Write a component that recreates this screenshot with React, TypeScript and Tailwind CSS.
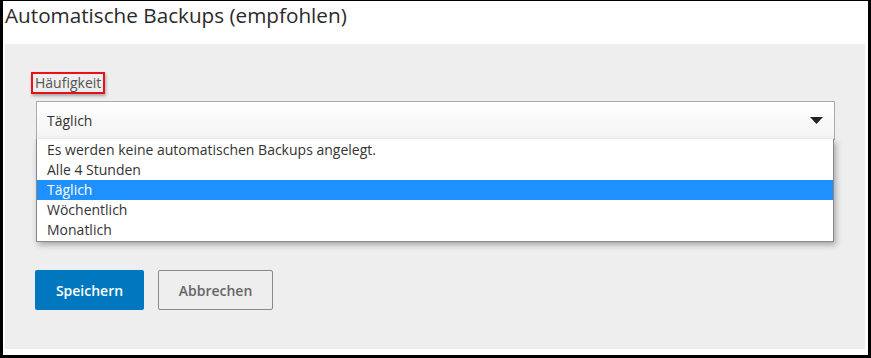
import React from "react";

export default function App() {
  const options = [
    "Es werden keine automatischen Backups angelegt.",
    "Alle 4 Stunden",
    "Täglich",
    "Wöchentlich",
    "Monatlich",
  ];
  return (
    <div
      className="w-[871px] h-[358px] bg-black pl-[3px] pt-[1px] pr-[3px] pb-[3px]"
      style={{ fontFamily: '"Open Sans", sans-serif' }}
    >
      <div className="w-full h-full bg-white flex flex-col pl-[2px] pr-[3px] pb-[6px]">
        <div className="h-[43px] text-[20.7px] leading-[28px] text-[#2a2a2a] pt-[0px]">
          Automatische Backups (empfohlen)
        </div>
        <div className="flex-1 bg-[#eeeeee] pl-[31px] pr-[30px] pt-[26px] relative">
          <div className="inline-block border-2 border-[#e8101a] px-[2px] h-[22px] leading-[17px] text-[14px] text-[#555] shadow-[1px_2px_3px_rgba(0,0,0,0.3)] -ml-[5px]">
            Häufigkeit
          </div>
          <div className="mt-[7px] h-[39px] bg-gradient-to-b from-white to-[#f4f4f4] border border-[#aaa] flex items-center justify-between pl-[10px] pr-[11px] text-[14px] text-[#333]">
            <span>Täglich</span>
            <svg width="13" height="7" viewBox="0 0 13 7">
              <polygon points="0,0 13,0 6.5,7" fill="#222" />
            </svg>
          </div>
          <div className="absolute left-[31px] top-[95px] w-[798px] bg-white border border-[#888] border-t-0 shadow-[2px_3px_6px_rgba(0,0,0,0.3)] text-[14px] text-[#333] pt-px pb-px">
            {options.map((o) => (
              <div
                key={o}
                className={
                  "h-[20px] leading-[20px] pl-[10px] " +
                  (o === "Täglich" ? "bg-[#1e90ff] text-white" : "")
                }
              >
                {o}
              </div>
            ))}
          </div>
          <div className="mt-[130px] flex gap-[14px] -ml-px">
            <button className="w-[109px] h-[40px] bg-[#0077be] rounded-[2px] text-white text-[14px] font-semibold">
              Speichern
            </button>
            <button className="w-[115px] h-[40px] border border-[#888] rounded-[2px] text-[#666] text-[14px] font-semibold">
              Abbrechen
            </button>
          </div>
        </div>
      </div>
    </div>
  );
}
